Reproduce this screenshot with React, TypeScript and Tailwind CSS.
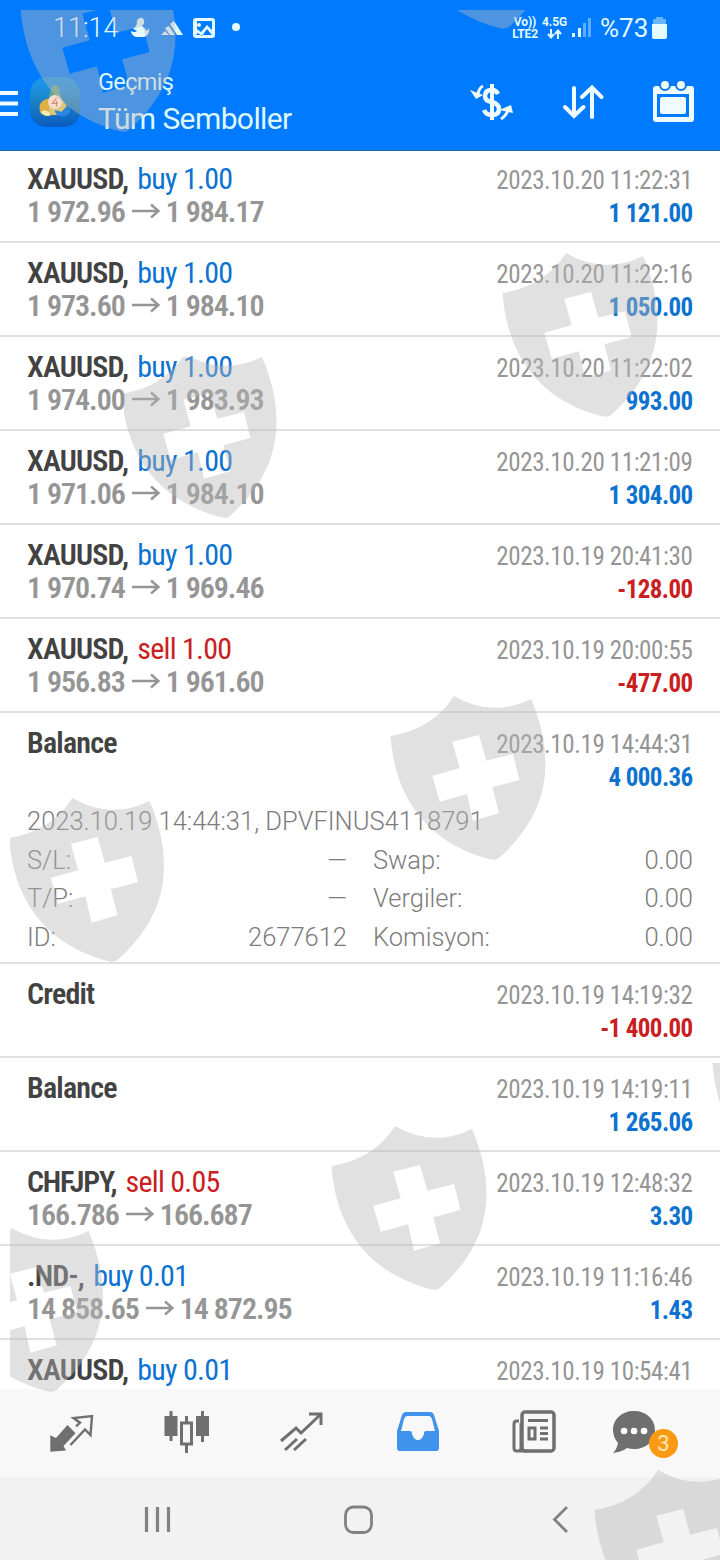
import type { ReactNode } from "react";

type Tone = "blue" | "red";

interface Deal {
  symbol: string;
  side?: "buy" | "sell";
  volume?: string;
  open?: string;
  close?: string;
  time: string;
  profit?: string;
  tone: Tone;
  details?: boolean;
}

const deals: Deal[] = [
  { symbol: "XAUUSD", side: "buy", volume: "1.00", open: "1 972.96", close: "1 984.17", time: "2023.10.20 11:22:31", profit: "1 121.00", tone: "blue" },
  { symbol: "XAUUSD", side: "buy", volume: "1.00", open: "1 973.60", close: "1 984.10", time: "2023.10.20 11:22:16", profit: "1 050.00", tone: "blue" },
  { symbol: "XAUUSD", side: "buy", volume: "1.00", open: "1 974.00", close: "1 983.93", time: "2023.10.20 11:22:02", profit: "993.00", tone: "blue" },
  { symbol: "XAUUSD", side: "buy", volume: "1.00", open: "1 971.06", close: "1 984.10", time: "2023.10.20 11:21:09", profit: "1 304.00", tone: "blue" },
  { symbol: "XAUUSD", side: "buy", volume: "1.00", open: "1 970.74", close: "1 969.46", time: "2023.10.19 20:41:30", profit: "-128.00", tone: "red" },
  { symbol: "XAUUSD", side: "sell", volume: "1.00", open: "1 956.83", close: "1 961.60", time: "2023.10.19 20:00:55", profit: "-477.00", tone: "red" },
  { symbol: "Balance", time: "2023.10.19 14:44:31", profit: "4 000.36", tone: "blue", details: true },
  { symbol: "Credit", time: "2023.10.19 14:19:32", profit: "-1 400.00", tone: "red" },
  { symbol: "Balance", time: "2023.10.19 14:19:11", profit: "1 265.06", tone: "blue" },
  { symbol: "CHFJPY", side: "sell", volume: "0.05", open: "166.786", close: "166.687", time: "2023.10.19 12:48:32", profit: "3.30", tone: "blue" },
  { symbol: ".ND-", side: "buy", volume: "0.01", open: "14 858.65", close: "14 872.95", time: "2023.10.19 11:16:46", profit: "1.43", tone: "blue" },
  { symbol: "XAUUSD", side: "buy", volume: "0.01", time: "2023.10.19 10:54:41", tone: "blue" },
];

function Arrow() {
  return (
    <svg width="28" height="16" viewBox="0 0 28 16" className="mr-[6px] ml-[7px] inline-block align-[3px]" fill="none" stroke="#959595" strokeWidth="2.4">
      <path d="M0 8H26M19 1.5L26.5 8L19 14.5" />
    </svg>
  );
}

function Detail({ label, value }: { label: string; value: string }) {
  return (
    <div className="flex justify-between leading-[38.6px]">
      <span>{label}</span>
      <span>{value}</span>
    </div>
  );
}

function DealRow({ deal }: { deal: Deal }) {
  const profitColor = deal.tone === "blue" ? "text-[#0d72d0]" : "text-[#c9201f]";
  const sideColor = deal.side === "sell" ? "text-[#c9201f]" : "text-[#0d72d0]";
  const symbolTracking = deal.symbol === "CHFJPY" ? "tracking-[-1.25px]" : "tracking-[-0.8px]";
  return (
    <div className={`shrink-0 border-b-2 border-[#e0e0e0] px-[27px] ${deal.details ? "h-[251px]" : "h-[94px]"}`}>
      <div className="flex justify-between font-['Roboto_Condensed','Roboto',sans-serif] whitespace-pre">
        <div className="pt-[13px] text-[30px] leading-[33px]">
          <div>
            <span className={`font-semibold text-[#424242] ${symbolTracking}`}>{deal.symbol}{deal.side ? "," : ""}</span>
            {deal.side && <span className={`ml-[3px] tracking-[-0.75px] ${sideColor}`}> {deal.side} {deal.volume}</span>}
          </div>
          {deal.open && <div className="font-semibold tracking-[-1.03px] text-[#959595]">{deal.open}<Arrow />{deal.close}</div>}
        </div>
        <div className="pt-[15px] text-right text-[25px] leading-[33px]">
          <div className="mr-[0.6px] tracking-[-0.38px] text-[#959595]">{deal.time}</div>
          {deal.profit && <div className={`mr-[0.4px] font-bold tracking-[-0.6px] ${profitColor}`}>{deal.profit}</div>}
        </div>
      </div>
      {deal.details && (
        <div className="mt-[8px] font-['Roboto',sans-serif] text-[25.5px] font-light text-[#7c7c7c]">
          <div className="leading-[38.6px]">2023.10.19 14:44:31, DPVFINUS4118791</div>
          <div className="grid grid-cols-2 gap-x-[26px]">
            <Detail label="S/L:" value="—" />
            <Detail label="Swap:" value="0.00" />
            <Detail label="T/P:" value="—" />
            <Detail label="Vergiler:" value="0.00" />
            <Detail label="ID:" value="2677612" />
            <Detail label="Komisyon:" value="0.00" />
          </div>
        </div>
      )}
    </div>
  );
}

function StatusBar() {
  return (
    <div className="flex h-[56px] items-center justify-between pr-[53px] pl-[53px] text-[#e4fbff]">
      <div className="flex items-center">
        <span className="w-[66px] text-[27px] font-light">11:14</span>
        <svg width="114" height="24" viewBox="131 16 114 24" className="ml-[12px]" fill="currentColor">
          <path d="M137 20q5-5 7 0 1 4-2 6 4 3 5 5l2-3q1 7-5 9h-8q-5-2-5-6 4 2 6 0-3-1-4-3 4 0 4-8z" />
          <path d="M161 35l4-4 4 4zM165 28l4-2 6 9h-5zM170 24l4-3 9 14h-6z" />
          <path fillRule="evenodd" d="M196 18h16q3 0 3 3v14q0 3-3 3h-16q-3 0-3-3V21q0-3 3-3zm1 3v8l4 3 6-7 5 5v-9zM196 35h16l-5-6-5 7-4-3z" />
          <circle cx="199" cy="25" r="2" />
          <circle cx="236" cy="27" r="4" />
        </svg>
      </div>
      <div className="flex items-center">
        <div className="flex gap-[4px] text-center text-[12px] leading-[12px] font-bold tracking-[-0.1px]">
          <div>Vo))<br />LTE2</div>
          <div className="flex flex-col items-center">
            4.5G
            <svg width="15" height="10" viewBox="0 0 15 10" className="mt-[1px]" fill="none" stroke="currentColor" strokeWidth="2">
              <path d="M4 0V8M1 5L4 8.5L7 5M11 10V2M8 5L11 1.5L14 5" />
            </svg>
          </div>
        </div>
        <svg width="19" height="20" viewBox="0 0 19 20" className="ml-[5px]" fill="currentColor">
          <path d="M0 15h3v4H0zM6 10h3v9H6z" />
          <path opacity=".4" d="M11 5h3v14h-3zM16 0h3v19h-3z" />
        </svg>
        <span className="ml-[9px] w-[48px] text-[26px]">%73</span>
        <svg width="15" height="22" viewBox="0 0 15 22" className="ml-[4px]" fill="currentColor">
          <path opacity=".45" d="M4 0h7v2h3v6H1V2h3z" />
          <path d="M0 7h15v13q0 2-2 2H2q-2 0-2-2z" />
        </svg>
      </div>
    </div>
  );
}

function AppLogo() {
  return (
    <svg width="52" height="52" viewBox="0 0 52 52">
      <defs>
        <linearGradient id="tile" x1="0" y1="0" x2="0" y2="1">
          <stop offset="0" stopColor="#30a8e0" stopOpacity=".55" />
          <stop offset=".5" stopColor="#1a80c4" />
          <stop offset="1" stopColor="#0a5cc0" />
        </linearGradient>
      </defs>
      <rect x="1" y="1" width="50" height="50" rx="16" fill="url(#tile)" />
      <path d="M26 9q3 0 4 4l2 8h-12l2-8q1-4 4-4z" fill="#6fa58d" />
      <path d="M11 36q-2-9 4-12l6-2 5 16-6 2q-7 0-9-4z" fill="#dfb040" />
      <path d="M20 22q6-5 12 0l6 8-8 9H20z" fill="#d9c67a" />
      <path d="M26 34l7 2 7-6 1 6q-2 5-10 4-5-1-5-6z" fill="#2a88e0" />
      <circle cx="26" cy="26" r="7" fill="#f6dccb" />
      <path d="M27.500 22l-4 5.500h5.500m-1.500-2.500v5.500" stroke="#d98a70" strokeWidth="1.200" fill="none" />
      <path d="M12 36q4-4 9 1l-1 3q-6 0-8-4z" fill="#f2eab0" />
    </svg>
  );
}

function Toolbar() {
  return (
    <div className="flex h-[94px] items-start pt-[12px] text-[#eefcff]">
      <svg width="18" height="28" viewBox="0 0 18 28" className="mt-[21px]" fill="currentColor">
        <path d="M0 2h18v4H0zM0 12.500h18v4H0zM0 23h18v4H0z" />
      </svg>
      <div className="mt-[8px] ml-[11px]">
        <AppLogo />
      </div>
      <div className="ml-[17px] flex-1 whitespace-nowrap text-[#dff8ff]">
        <div className="text-[23.5px] leading-[28px] tracking-[-0.65px]">Geçmiş</div>
        <div className="mt-[3px] text-[30px] leading-[39px] tracking-[-0.6px]">Tüm Semboller</div>
      </div>
      <svg width="224" height="44" viewBox="470 79 224 44" className="mt-[11px] mr-[26px]" fill="none" stroke="currentColor">
        <path strokeWidth="4.500" d="M498 94q-2-4-6-4-7 0-7 6 0 5 7 6 7 2 7 7 0 6-7 6-6 0-8-5" />
        <path strokeWidth="4" d="M492 84V120" />
        <path strokeWidth="3" d="M483 86q-4 2-5 8M501 119q5-3 7-9" />
        <path fill="currentColor" stroke="none" d="M470 90l13 5-7 4zM499 110l12-5 2 8z" />
        <path strokeWidth="4" strokeLinecap="round" d="M574 88V116M565 107L574 116L583.500 107M592 117V88M582 97L592 87.500L601.500 97" />
        <path fill="currentColor" stroke="none" fillRule="evenodd" d="M656 86h35q3 0 3 3v30q0 3-3 3h-35q-3 0-3-3V89q0-3 3-3zm1 8v23h32V94z" />
        <rect x="660" y="97" width="26" height="17" rx="2" fill="currentColor" stroke="none" />
        <circle cx="665" cy="85" r="5" fill="currentColor" stroke="#0877ea" strokeWidth="2" />
        <circle cx="681" cy="85" r="5" fill="currentColor" stroke="#0877ea" strokeWidth="2" />
      </svg>
    </div>
  );
}

function TabIcon({ children, className, width = 48 }: { children: ReactNode; className: string; width?: number }) {
  return (
    <svg width={width} height="48" viewBox={`0 0 ${width} 48`} className={className} fill="none" stroke="currentColor">
      {children}
    </svg>
  );
}

function TabBar() {
  return (
    <div className="flex h-[88px] items-start bg-[#f8f8f8] pt-[19px] text-[#6f6f6f]">
      <TabIcon className="ml-12">
        <path fill="currentColor" stroke="none" d="M2.300 27.300L8 30L19.500 17L27.500 25.300L15.500 38L18 42.500L2.300 43.700Z" />
        <path strokeWidth="2.400" d="M28 18.500L32 14.700L25.500 10L44 8L42.500 27L37 21.500L22.500 37" />
      </TabIcon>
      <TabIcon className="ml-[68px]">
        <path fill="currentColor" stroke="none" d="M0.500 8h13v20h-13zM32 8h13v20H32z" />
        <path strokeWidth="3" d="M7 3V33M38.500 3V34M22.500 8V15M22.500 37V45" />
        <rect x="17.500" y="15" width="10" height="21" strokeWidth="3" />
      </TabIcon>
      <TabIcon className="ml-[68px]">
        <path strokeWidth="3" d="M1 33L16 20L21 25L40 7M29 6H41V17" />
        <path strokeWidth="3" d="M5 42L17 31M14 42L26 31" />
      </TabIcon>
      <TabIcon className="ml-[68px] text-[#3f93ed]">
        <path fill="currentColor" stroke="none" fillRule="evenodd" d="M10 4h24q3 0 4 3l5 16v17q0 3-3 3H4q-3 0-3-3V23L6 7q1-3 4-3zm1 4q-2 0-3 3L5 23h9q2 0 2 3 2 6 6 6t6-6q0-3 2-3h9l-3-12q-1-3-3-3z" />
      </TabIcon>
      <TabIcon className="ml-[67px]">
        <rect x="11" y="4" width="32" height="39" rx="3" strokeWidth="3.500" />
        <path strokeWidth="3" d="M8 13H6q-3 0-3 3v24q0 3 3 3h10M10 15v25q0 3-3 3M17 12.500H37M29 20H37M29 25.500H37M29 31H37" />
        <rect x="18" y="20" width="6" height="11" strokeWidth="3" />
      </TabIcon>
      <div className="relative ml-[53px]">
        <TabIcon className="">
          <path fill="currentColor" stroke="none" d="M22 3c12 0 21 8 21 19s-9 19-21 19q-4 0-7-1-5 4-14 5 4-4 5-10-5-6-5-13C1 11 10 3 22 3z" />
          <path stroke="#fff" strokeWidth="6.500" strokeLinecap="round" d="M12 23h.1M22 23h.1M32 23h.1" />
        </TabIcon>
        <span className="absolute top-[21px] left-[37px] flex size-[29px] items-center justify-center rounded-full bg-[#f99a12] text-[22px] leading-none text-[#ffe9bc]">3</span>
      </div>
    </div>
  );
}

function SystemNav() {
  return (
    <div className="flex h-[83px] items-start bg-[#f2f2f2] pt-[28px] text-[#818181]">
      <svg width="426" height="30" viewBox="144 1505 426 30" className="ml-[144px]" fill="none" stroke="currentColor" strokeWidth="2.800">
        <path d="M146.500 1507V1532M157.500 1507V1532M168.500 1507V1532" strokeWidth="3.200" />
        <rect x="345.500" y="1507" width="26" height="25.500" rx="8" />
        <path d="M567 1507L554.500 1519.500L567 1532" />
      </svg>
    </div>
  );
}

const shieldPath =
  "M.5 40Q43 33 64 0Q102 22 141 3C158 42 160 80 147 111Q135 139 109 162Q105 165 99 163C50 150 6 115 .5 40Z" +
  "M62.300 45.700L89 39L96.300 64.700L123 58L129.500 84L102.300 91.300L109 117.300L83 124.700L77 98.300L49.700 105.700L42.300 79.700L69.700 72.300Z";

const shields = [
  { x: 20, y: -32, clip: [20, 10, 176, 160] },
  { x: 400, y: -135, clip: [400, 10, 180, 160] },
  { x: 502, y: 253, clip: [500, 250, 170, 180] },
  { x: 121, y: 354, clip: [124, 357, 170, 180] },
  { x: 390, y: 696, clip: [380, 690, 180, 180] },
  { x: 8.500, y: 798, clip: [10, 790, 180, 180] },
  { x: 331, y: 1126, clip: [320, 1120, 180, 180] },
  { x: 712, y: 1023, clip: [710, 1063, 10, 180] },
  { x: -52.500, y: 1228, clip: [10, 1220, 180, 180] },
  { x: 594, y: 1470, clip: [590, 1460, 130, 100] },
];

function Watermark() {
  return (
    <svg width="720" height="1560" viewBox="0 0 720 1560" className="pointer-events-none absolute inset-0" fill="#b7b7b7" fillOpacity=".42">
      {shields.map((s, i) => (
        <g key={i}>
          <clipPath id={`area-${i}`}>
            <rect x={s.clip[0]} y={s.clip[1]} width={s.clip[2]} height={s.clip[3]} />
          </clipPath>
          <g clipPath={`url(#area-${i})`}>
            <path d={shieldPath} fillRule="evenodd" transform={`translate(${s.x} ${s.y})`} />
          </g>
        </g>
      ))}
    </svg>
  );
}

export default function App() {
  return (
    <div className="relative flex h-[1560px] w-[720px] flex-col overflow-hidden bg-white font-['Roboto',sans-serif]">
      <header className="h-[151px] shrink-0 border-b border-[#1b66ad] bg-[#007aff]">
        <StatusBar />
        <Toolbar />
      </header>
      <main className="flex h-[1238px] shrink-0 flex-col overflow-hidden">
        <div className="-mt-[2px] flex flex-col">
          {deals.map((d, i) => (
            <DealRow key={i} deal={d} />
          ))}
        </div>
      </main>
      <TabBar />
      <SystemNav />
      <Watermark />
    </div>
  );
}
